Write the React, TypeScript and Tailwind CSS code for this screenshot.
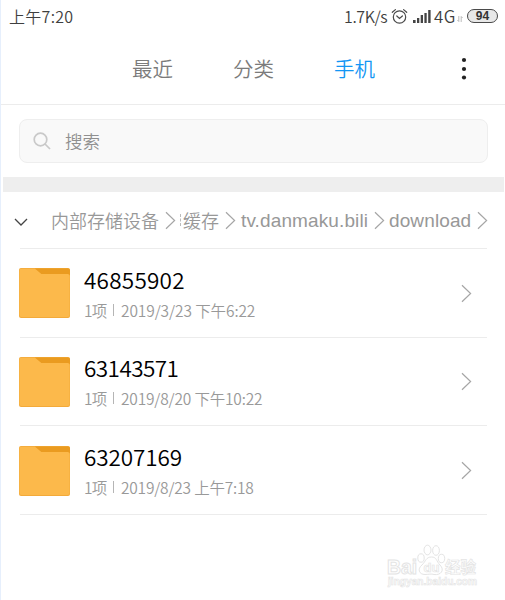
import clsx from "clsx"

const folders = [
  {
    name: "46855902",
    count: "1项",
    date: "2019/3/23 下午6:22",
    row: "h-[89px]",
    nameTracking: "tracking-[0.25px]",
    dateTracking: "tracking-[-0.1px]",
  },
  {
    name: "63143571",
    count: "1项",
    date: "2019/8/20 下午10:22",
    row: "h-[88px]",
    nameTracking: "tracking-[-0.55px]",
    dateTracking: "tracking-[-0.18px]",
  },
  {
    name: "63207169",
    count: "1项",
    date: "2019/8/23 上午7:18",
    row: "h-[89px] pt-px",
    nameTracking: "tracking-[-0.1px]",
    dateTracking: "tracking-[-0.2px]",
  },
]

function Chevron({ className }: { className?: string }) {
  return (
    <svg viewBox="0 0 11 19" fill="none" className={clsx("h-[19px] w-[11px] shrink-0", className)}>
      <path d="M1 1.2L9.6 9.5L1 17.8" stroke="#a6a6a6" strokeWidth="1.2" />
    </svg>
  )
}

function FolderIcon() {
  return (
    <svg viewBox="0 0 51 50" className="h-[50px] w-[51px] shrink-0">
      <rect width="51" height="50" rx="2" fill="#f3aa3a" />
      <path d="M2 0.8H16L22.5 6H49Q50.5 6 50.5 7.5V47Q50.5 49 48.5 49H2.5Q0.5 49 0.5 47V2.3Q0.5 0.8 2 0.8Z" fill="#fcb94b" />
      <path d="M16 0.5H49Q51 0.5 51 2.5V7.5Q50.5 6 49 6H22.5Z" fill="#ea9b20" />
    </svg>
  )
}

function StatusBar() {
  return (
    <div className="flex h-[32px] items-center pl-[8px] pr-[7px] text-[#3f3f3f]">
      <span className="text-[16px] leading-[32px] tracking-[0.3px]">上午7:20</span>
      <div className="ml-auto flex h-full items-center">
        <span className="w-[45px] whitespace-nowrap text-[16px] leading-[32px] tracking-[-0.4px]">1.7K/s</span>
        {/* Alarm */}
        <svg viewBox="0 0 17 17" fill="none" stroke="#4a4a4a" strokeWidth="1.2" strokeLinecap="round" className="ml-[2px] h-[17px] w-[17px]">
          <circle cx="8.5" cy="9" r="6.2" />
          <path d="M1.3 4.3L4.4 1.6M12.6 1.6L15.7 4.3M5.8 8L8.5 10.4L11.4 8" />
        </svg>
        {/* Signal */}
        <svg viewBox="0 0 18 13" fill="#444" className="ml-[5px] h-[13px] w-[18px]">
          <rect x="0" y="10" width="2.6" height="3" />
          <rect x="4" y="8" width="2.3" height="5" />
          <rect x="7.7" y="5" width="2.3" height="8" />
          <rect x="11.4" y="3" width="2.3" height="10" />
          <rect x="15.2" y="0" width="2.4" height="13" />
        </svg>
        <span className="ml-[3px] w-[22px] text-[17px] leading-[32px] tracking-[0.5px]">4G</span>
        <svg viewBox="0 0 6 6" fill="none" stroke="#aaa" strokeWidth="0.8" className="ml-px mt-[5px] h-[6px] w-[6px]">
          <path d="M1.8 0V5.5M0.4 4L1.8 5.5M4.2 6V0.5M4.2 0.5L5.6 2" />
        </svg>
        <span className="ml-[4px] flex h-[14px] w-[31px] items-center justify-center rounded-full border-[1.5px] border-[#4a4a4a] bg-[#e8e8e8] font-['Liberation_Sans',sans-serif] text-[12px] font-bold leading-none text-[#333]">
          94
        </span>
      </div>
    </div>
  )
}

function Tabs() {
  return (
    <div className="flex h-[73px] border-b border-[#ececec] pl-[131px] text-[20.5px] leading-[72px] text-[#7b7b7b]">
      <span className="w-[101px]">最近</span>
      <span className="w-[101px]">分类</span>
      <span className="text-[#1296f4]">手机</span>
      <svg viewBox="0 0 6 24" fill="#222" className="ml-auto mr-[38px] mt-[25px] h-[24px] w-[6px]">
        <circle cx="3" cy="3" r="2.1" />
        <circle cx="3" cy="12" r="2.1" />
        <circle cx="3" cy="20.5" r="2.1" />
      </svg>
    </div>
  )
}

function Breadcrumb() {
  return (
    <div className="ml-[13px] flex h-[56px] w-[479px] items-center text-[#989898]">
      <svg viewBox="0 0 14 8" fill="none" className="mt-[4px] h-[8px] w-[14px] shrink-0">
        <path d="M1 1L7 7L13 1" stroke="#444" strokeWidth="1.3" />
      </svg>
      <span className="ml-[23px] w-[109px] whitespace-nowrap text-[18px]">内部存储设备</span>
      <Chevron className="ml-[5px]" />
      {/* folder name scrolled under the previous arrow */}
      <span className="ml-[4px] h-[12px] w-[2px] shrink-0 border-l border-dashed border-[#bbb]" />
      <span className="ml-px w-[37px] whitespace-nowrap text-[18px]">缓存</span>
      <Chevron className="ml-[5px]" />
      <span className="ml-[5px] w-[129px] whitespace-nowrap pt-[2px] font-['Liberation_Sans',sans-serif] text-[19px] font-normal tracking-[0.12px]">tv.danmaku.bili</span>
      <Chevron className="ml-[4px]" />
      <span className="ml-[4px] w-[83px] whitespace-nowrap pt-[2px] font-['Liberation_Sans',sans-serif] text-[19px] font-normal tracking-[0.12px]">download</span>
      <Chevron className="ml-[5px]" />
    </div>
  )
}

function Watermark() {
  return (
    <svg viewBox="0 0 100 50" className="absolute left-[382px] top-[540px] h-[50px] w-[100px]" fill="#fff" stroke="#e4e4e4" strokeWidth="1">
      <g fontFamily="Liberation Sans, Noto Sans CJK SC, sans-serif" fontWeight="bold">
        <text x="4" y="33.5" fontSize="19.5" textLength="30" lengthAdjust="spacingAndGlyphs">Bai</text>
        <ellipse cx="38" cy="18" rx="3.2" ry="4.2" />
        <ellipse cx="44.5" cy="10" rx="3.5" ry="4.8" />
        <ellipse cx="53" cy="10.5" rx="3.4" ry="4.8" />
        <ellipse cx="58.5" cy="18.5" rx="3.2" ry="4.2" />
        <path d="M48.5 17C43 17 43 21 39 25C34 29 36 34.5 42 34.5C46 34.5 48 33.5 51 34.5C58 35.5 62 30 57 25C53 21 54 17 48.5 17Z" />
        <text x="40.5" y="31.5" fontSize="13" strokeWidth="0.7">du</text>
        <text x="62" y="33" fontSize="15.5" strokeWidth="0.7">经验</text>
        <text x="5" y="45" fontSize="10" textLength="89" lengthAdjust="spacingAndGlyphs" strokeWidth="0.6">jingyan.baidu.com</text>
      </g>
    </svg>
  )
}

export default function App() {
  return (
    <div className="relative h-[600px] w-[505px] overflow-hidden border-l border-[#e6effc] bg-white font-['Noto_Sans_CJK_SC',sans-serif] font-[350]">
      <StatusBar />
      <Tabs />

      {/* Search */}
      <div className="ml-[18px] mt-[14px] flex h-[44px] w-[469px] items-center rounded-[8px] border border-[#eee] bg-[#f9f9f9] pl-[13px]">
        <svg viewBox="0 0 18 18" fill="none" stroke="#c9c9c9" strokeWidth="1.7" className="h-[18px] w-[18px]">
          <circle cx="7.5" cy="7.5" r="6.3" />
          <path d="M12 12L17 17" />
        </svg>
        <span className="ml-[14px] text-[17.5px] leading-[42px] text-[#909090]">搜索</span>
      </div>

      <div className="ml-[2px] mr-px mt-[14px] h-[15px] bg-[#eee]" />

      <Breadcrumb />

      <div className="ml-[19px] w-[467px] border-t border-[#ececec]">
        {folders.map((folder) => (
          <div key={folder.name} className={clsx("flex items-center border-b border-[#ececec] pr-[15px]", folder.row)}>
            <div className="-ml-px">
              <FolderIcon />
            </div>
            <div className="ml-[14px]">
              <p className={clsx("text-[22.5px] leading-[30px] text-black", folder.nameTracking)}>{folder.name}</p>
              <div className="mt-[3px] flex items-center text-[15.5px] leading-[26px] text-[#999]">
                <span className="w-[22px] whitespace-nowrap tracking-[-0.8px]">{folder.count}</span>
                <span className="ml-[7px] h-[12px] w-px bg-[#b5b5b5]" />
                <span className={clsx("ml-[7px] whitespace-nowrap", folder.dateTracking)}>{folder.date}</span>
              </div>
            </div>
            <Chevron className="ml-auto" />
          </div>
        ))}
      </div>

      <Watermark />
    </div>
  )
}
